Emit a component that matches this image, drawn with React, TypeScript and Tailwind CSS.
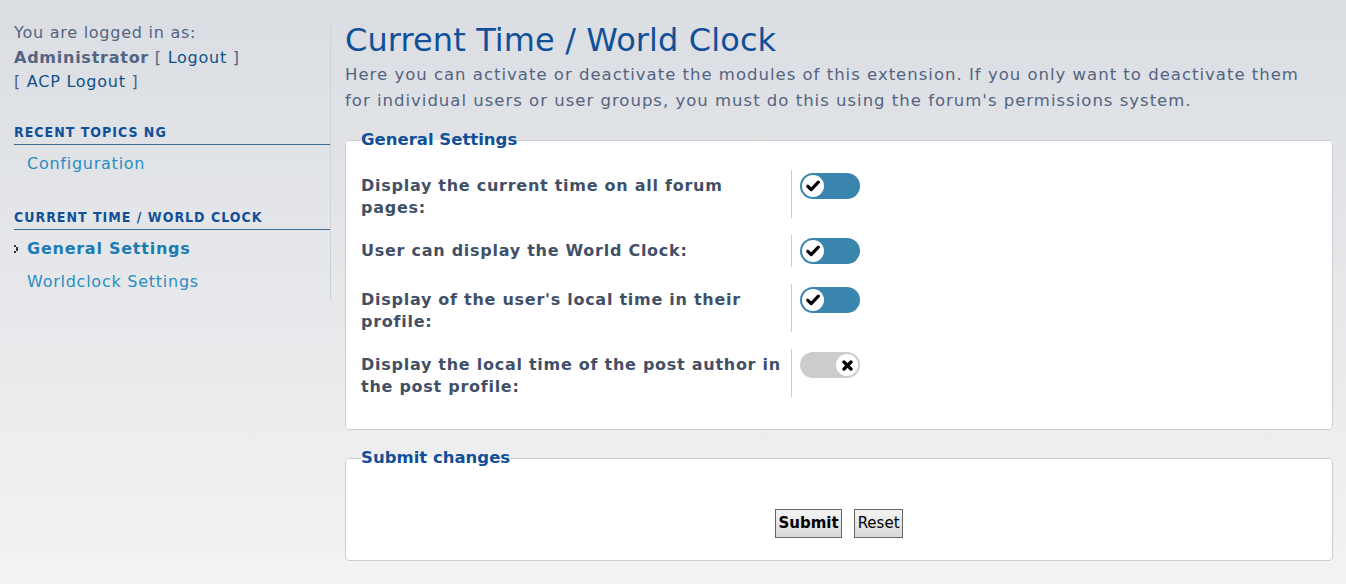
import React from 'react';

const verdana = { fontFamily: '"DejaVu Sans", Verdana, sans-serif' };
const tahoma = { fontFamily: '"DejaVu Sans Condensed", "Liberation Sans", sans-serif', letterSpacing: '1px' };

function Toggle({ on }: { on: boolean }) {
  return (
    <div
      className={`relative w-[60px] h-[26px] rounded-full ${on ? 'bg-[#3a85ad]' : 'bg-[#cccccc]'}`}
    >
      <div
        className={`absolute top-[2px] w-[22px] h-[22px] rounded-full bg-white flex items-center justify-center ${
          on ? 'left-[2px]' : 'right-[2px]'
        }`}
      >
        {on ? (
          <svg width="14" height="12" viewBox="0 0 14 12">
            <path d="M1.8 6.3 L5.2 9.6 L12.3 2.2" fill="none" stroke="#000" strokeWidth="3.2" strokeLinecap="round" strokeLinejoin="round" />
          </svg>
        ) : (
          <svg width="11" height="11" viewBox="0 0 11 11">
            <path d="M2 2 L9 9 M9 2 L2 9" fill="none" stroke="#000" strokeWidth="3.2" strokeLinecap="round" />
          </svg>
        )}
      </div>
    </div>
  );
}

const settings = [
  { label: 'Display the current time on all forum pages:', on: true },
  { label: 'User can display the World Clock:', on: true },
  { label: "Display of the user's local time in their profile:", on: true },
  { label: 'Display the local time of the post author in the post profile:', on: false },
];

export default function App() {
  return (
    <div
      className="w-[1346px] h-[584px] overflow-hidden bg-gradient-to-b from-[#dadde2] to-[#f3f3f3] flex"
      style={verdana}
    >
      {/* sidebar */}
      <div className="w-[331px] shrink-0 pt-[21px]">
        <div className="border-r border-[#cfd2d6] pl-[14px] pb-[6px] tracking-[0.75px]">
          <div className="text-[16px] leading-[24.5px] text-[#536482]">
            <div>You are logged in as:</div>
            <div>
              <span className="font-bold">Administrator</span> [ <span className="text-[#105289]">Logout</span> ]
            </div>
            <div>
              [ <span className="text-[#105289]">ACP Logout</span> ]
            </div>
          </div>

          <div
            className="mt-[28px] text-[14px] font-bold text-[#115098] border-b border-[#3f6d99] pb-[3px] leading-[18px]"
            style={tahoma}
          >
            RECENT TOPICS NG
          </div>
          <div className="pl-[13px] pt-[7px] text-[16px] leading-[24px] text-[#2a8dc2]">Configuration</div>

          <div
            className="mt-[32px] text-[14px] font-bold text-[#115098] border-b border-[#3f6d99] pb-[3px] leading-[18px]"
            style={tahoma}
          >
            CURRENT TIME / WORLD CLOCK
          </div>
          <div className="flex items-center pt-[7px] text-[16px] leading-[24px]">
            <svg width="13" height="10" viewBox="0 0 13 10" className="shrink-0">
              <rect x="0" y="1" width="2" height="2" fill="#333" />
              <rect x="2" y="3" width="2" height="2" fill="#333" />
              <rect x="2" y="5" width="2" height="2" fill="#333" />
              <rect x="0" y="7" width="2" height="2" fill="#333" />
            </svg>
            <span className="font-bold text-[#1b7cb2]">General Settings</span>
          </div>
          <div className="pl-[13px] pt-[9px] text-[16px] leading-[24px] text-[#2a8dc2]">Worldclock Settings</div>
        </div>
      </div>

      {/* main */}
      <div className="flex-1 pl-[14px] pr-[13px] pt-[20px]">
        <h1 className="text-[32px] leading-[40px] text-[#115098] tracking-[0.1px]">
          Current Time / World Clock
        </h1>
        <p className="text-[16.5px] leading-[26px] text-[#536482] mt-[2px] tracking-[1px]">
          Here you can activate or deactivate the modules of this extension. If you only want to deactivate them
          <br />
          for individual users or user groups, you must do this using the forum's permissions system.
        </p>

        <fieldset className="mt-[16px] bg-white border border-[#cccccc] rounded-[4px] px-[15px] pt-[20px] pb-[32px]">
          <legend className="px-0 text-[16.5px] font-bold text-[#115098] leading-[20px]">General Settings</legend>
          <div className="flex flex-col gap-[17px]">
            {settings.map((s) => (
              <div key={s.label} className="flex">
                <div className="w-[430px] shrink-0 pr-[6px] pt-[5px] text-[16px] leading-[21.5px] font-bold text-[#425067] tracking-[0.73px]">
                  {s.label}
                </div>
                <div className="border-l border-[#cccccc] pl-[8px] py-[3px] min-h-[32px]">
                  <Toggle on={s.on} />
                </div>
              </div>
            ))}
          </div>
        </fieldset>

        <fieldset className="mt-[18px] bg-white border border-[#cccccc] rounded-[4px] px-[15px] pt-[41px] pb-[22px]">
          <legend className="px-0 text-[16.5px] font-bold text-[#115098] leading-[20px]">Submit changes</legend>
          <div className="flex justify-center gap-[12px]">
            <button className="h-[29px] px-[2.5px] border border-[#666666] bg-gradient-to-b from-[#f4f4f4] to-[#d8d8d8] text-[15px] font-bold text-black">
              Submit
            </button>
            <button className="h-[29px] px-[2.5px] border border-[#666666] bg-gradient-to-b from-[#f4f4f4] to-[#d8d8d8] text-[15px] text-black">
              Reset
            </button>
          </div>
        </fieldset>
      </div>
    </div>
  );
}
